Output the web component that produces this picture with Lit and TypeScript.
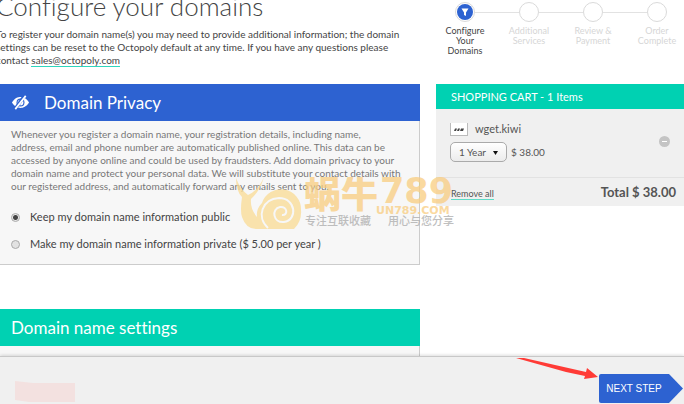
import { LitElement, html, css, svg } from "lit";
import { customElement, state } from "lit/decorators.js";

const STEPS = [
  ["Configure", "Your", "Domains"],
  ["Additional", "Services"],
  ["Review &", "Payment"],
  ["Order", "Complete"],
];

const hiddenEye = svg`
  <path d="M1 8.500C4 4 7 2.800 10 2.800S16 4 19 8.500C16 13 13 14.200 10 14.200S4 13 1 8.500Z" fill="#fff"/>
  <circle cx="10" cy="8.500" r="4.200" fill="#2d62d1"/>
  <circle cx="10" cy="8.500" r="3" fill="#fff"/>
  <path d="M4.500 15L14.500 1" stroke="#2d62d1" stroke-width="3.600"/>
  <path d="M4.500 15.500L15.500 1.500" stroke="#fff" stroke-width="1.800"/>`;

@customElement("checkout-steps")
export class CheckoutSteps extends LitElement {
  static styles = css`
    :host { display: block; }
    .steps {
      display: grid;
      grid-template-columns: repeat(4, 1fr);
      list-style: none;
      margin: 0 -5px 0 -3px;
      padding: 2px 0 0;
    }
    .step {
      display: flex;
      flex-direction: column;
      align-items: center;
      color: #d6d6d6;
      font-size: 9px;
      line-height: 10px;
      text-align: center;
    }
    .track { display: flex; align-items: center; align-self: stretch; margin-bottom: 4px; }
    .track::before, .track::after { content: ""; flex: 1; height: 1px; background: #e2e2e2; }
    .step:first-child .track::before, .step:last-child .track::after { background: none; }
    .dot {
      box-sizing: border-box;
      width: 20px;
      height: 20px;
      border: 1px solid #dadada;
      border-radius: 50%;
      padding: 1px;
    }
    .dot svg { display: block; width: 16px; height: 16px; }
    .current { color: #444; }
    .line { display: block; }
  `;
  render() {
    return html`<ol class="steps">
      ${STEPS.map(
        (lines, i) => html`<li class="step ${i === 0 ? "current" : ""}">
          <span class="track"><span class="dot">${
            i === 0
              ? html`<svg viewBox="0 0 16 16" aria-hidden="true">
                  <circle cx="8" cy="8" r="8" fill="#2d62d1" />
                  <path d="M4.500 4.500h7L9 8.500V12L7 11V8.500Z" fill="#fff" />
                </svg>`
              : ""
          }</span></span>
          ${lines.map((l) => html`<span class="line">${l}</span>`)}
        </li>`
      )}
    </ol>`;
  }
}

@customElement("shopping-cart")
export class ShoppingCart extends LitElement {
  static styles = css`
    :host { display: block; color: #555; }
    .cart { background: #f0f0f0; }
    h2 {
      margin: 0;
      padding: 0 15px;
      background: #00d1b2;
      color: #fff;
      font-size: 11px;
      font-weight: 400;
      line-height: 25px;
    }
    .item { display: flex; align-items: center; padding: 12px 14px 15px; border-bottom: 1px solid #e2e2e2; }
    .info { flex: 1; }
    .name { display: flex; align-items: center; gap: 7px; font-size: 11px; line-height: 16px; }
    .thumb { width: 18px; height: 13px; }
    .term { display: flex; align-items: center; gap: 4px; padding-top: 5px; font-size: 10px; }
    .picker { position: relative; display: flex; }
    select {
      appearance: none;
      width: 57px;
      height: 20px;
      padding: 0 8px;
      border: 1px solid #aaa;
      border-radius: 5px;
      background: linear-gradient(#fff, #ececec);
      color: #555;
      font: 10px Lato, sans-serif;
    }
    .caret { position: absolute; right: 9px; top: 9px; width: 5px; height: 4px; pointer-events: none; }
    .remove { width: 11px; height: 11px; padding: 0; border: 0; background: none; }
    .remove svg { display: block; }
    .sum { display: flex; justify-content: space-between; align-items: center; padding: 4px 8px 4px 15px; }
    a { margin-top: 4px; border-bottom: 1px solid #5fdcc8; color: #555; font-size: 9px; line-height: 11px; text-decoration: none; }
    .total { font-size: 13px; font-weight: 700; line-height: 20px; }
  `;
  render() {
    return html`<section class="cart">
      <h2>SHOPPING CART - 1 Items</h2>
      <div class="item">
        <div class="info">
          <div class="name">
            <svg class="thumb" viewBox="0 0 18 13" aria-hidden="true">
              <path d="M0 0h18v13H0Z" fill="#bbb" />
              <path d="M1 0h16v12H1Z" fill="#fff" />
              <path d="M4 8l1-2.500h2l-1 2.500M7 8l1-2.500h2l-1 2.500M10 8l1-2.500h3l-1 2.500" fill="#444" />
            </svg>
            <span>wget.kiwi</span>
          </div>
          <div class="term">
            <span class="picker">
              <select aria-label="Registration term"><option>1 Year</option></select>
              <svg class="caret" viewBox="0 0 5 4" aria-hidden="true"><path d="M0 0h5L2.500 4Z" fill="#111" /></svg>
            </span>
            <span>$ 38.00</span>
          </div>
        </div>
        <button class="remove" aria-label="Remove wget.kiwi">
          <svg width="11" height="11" viewBox="0 0 11 11" aria-hidden="true">
            <circle cx="5.500" cy="5.500" r="5.500" fill="#c4c4c4" />
            <path d="M3 5h5v1H3Z" fill="#fff" />
          </svg>
        </button>
      </div>
      <div class="sum">
        <a href="#remove">Remove all</a>
        <span class="total">Total $ 38.00</span>
      </div>
    </section>`;
  }
}

@customElement("app-root")
export class AppRoot extends LitElement {
  static styles = css`
    :host {
      display: flex;
      flex-direction: column;
      position: relative;
      height: 100vh;
      overflow: hidden;
      background: #fff;
      color: #444;
      font: 10px/13px Lato, "Noto Sans CJK SC", sans-serif;
      font-variant-ligatures: none;
    }
    .page {
      flex: 1;
      min-height: 0;
      overflow: hidden;
      display: grid;
      grid-template-columns: minmax(0, 420fr) minmax(0, 248fr);
      grid-template-rows: 84px auto;
      column-gap: 16px;
    }
    .intro { margin-left: -4px; white-space: nowrap; }
    h1 { margin: -9px 0 7px; font-size: 26px; font-weight: 300; line-height: 30px; }
    p { margin: 0; white-space: nowrap; }
    .line { display: block; }
    .intro a { border-bottom: 1px solid #2fd6bd; color: inherit; text-decoration: none; }
    .card { position: relative; margin-bottom: 44px; border: solid #ccc; border-width: 0 1px 1px 0; background: #f7f7f7; }
    .card h2 {
      display: flex;
      align-items: center;
      gap: 14px;
      height: 37px;
      margin: 0 -1px 0 0;
      padding: 0 11px;
      background: #2d62d1;
      color: #fff;
      font-size: 17px;
      font-weight: 400;
    }
    .card .green { background: #00d1b2; }
    .eye { width: 19px; height: 17px; }
    .body { padding: 7px 11px 11px; }
    .body p { color: #777; }
    .settings { padding-top: 8px; }
    .options { display: grid; gap: 9px; margin-top: 15px; }
    .option { display: flex; align-items: center; gap: 10px; font-size: 11px; line-height: 18px; }
    .option input {
      appearance: none;
      width: 9px;
      height: 9px;
      margin: 0;
      border: 1px solid #aaa;
      border-radius: 50%;
      background: #e2e2e2;
      box-sizing: border-box;
    }
    .option input:checked { background: radial-gradient(circle, #444 0 2px, #e8e8e8 3px); }
    .mark { position: absolute; left: 234px; top: 93px; width: 222px; height: 54px; z-index: 1; opacity: 0.75; pointer-events: none; }
    .bar {
      position: relative;
      display: flex;
      justify-content: space-between;
      align-items: flex-end;
      box-sizing: border-box;
      height: 48px;
      padding: 0 1px 1px 15px;
      border-top: 1px solid #c8c8c8;
      background: #f0f0f0;
      box-shadow: 0 -1px 3px #0002;
    }
    .smudge { width: 60px; height: 22px; }
    .next {
      width: 84px;
      height: 29px;
      padding: 0 14px 0 0;
      border: 0;
      border-radius: 2px;
      background: #2d62d1;
      clip-path: polygon(0 0, 70px 0, 100% 50%, 70px 100%, 0 100%);
      color: #fff;
      font: 10px "Liberation Sans", sans-serif;
    }
    .arrow { position: absolute; right: 86px; top: 0; width: 82px; height: 23px; }
  `;

  @state() private masked = false;

  render() {
    return html`
      <main class="page">
        <header class="intro">
          <h1>Configure your domains</h1>
          <p>
            <span class="line">To register your domain name(s) you may need to provide additional information; the domain</span>
            <span class="line">settings can be reset to the Octopoly default at any time. If you have any questions please</span>
            <span class="line">contact <a href="mailto:sales@octopoly.com">sales@octopoly.com</a></span>
          </p>
        </header>
        <checkout-steps></checkout-steps>
        <div>
          <section class="card">
            <h2><svg class="eye" viewBox="0 0 20 17" aria-hidden="true">${hiddenEye}</svg>Domain Privacy</h2>
            <div class="body">
              <p>
                <span class="line">Whenever you register a domain name, your registration details, including name,</span>
                <span class="line">address, email and phone number are automatically published online. This data can be</span>
                <span class="line">accessed by anyone online and could be used by fraudsters. Add domain privacy to your</span>
                <span class="line">domain name and protect your personal data. We will substitute your contact details with</span>
                <span class="line">our registered address, and automatically forward any emails sent to you.</span>
              </p>
              <div class="options">
                <label class="option"><input type="radio" name="privacy" .checked=${!this.masked} @change=${() => (this.masked = false)} />Keep my domain name information public</label>
                <label class="option"><input type="radio" name="privacy" .checked=${this.masked} @change=${() => (this.masked = true)} />Make my domain name information private ($ 5.00 per year )</label>
              </div>
            </div>
            <svg class="mark" viewBox="0 0 222 54" aria-hidden="true">
              <path d="M2 1Q2 14 8 20Q6 34 8 40Q12 52 22 52H60Q68 44 67 33A20 20 0 0 0 28 26Q22 32 23 40Q16 32 17 22Q26 14 30 0Q24 14 14 18Q6 12 2 1Z" fill="#fadb94" />
              <path d="M34 51C22 40 28 22 45 21C62 21 64 43 50 45C39 46 37 32 46 30C54 29 54 39 48 38" fill="none" stroke="#f7f7f7" stroke-width="2" />
              <g fill="#f9cd80" font-weight="900">
                <text x="70" y="31" font-size="37" font-family="Noto Sans CJK SC, sans-serif">蜗牛</text>
                <text x="146" y="26" font-size="35" font-family="DejaVu Sans, sans-serif">789</text>
                <text x="142" y="37" font-size="11" font-family="DejaVu Sans, sans-serif">UN789.COM</text>
              </g>
              <g fill="#aaa" font-family="Noto Sans CJK SC, sans-serif" font-size="11" font-weight="500">
                <text x="71" y="48">专注互联收藏</text>
                <text x="154" y="48">用心与您分享</text>
              </g>
            </svg>
          </section>
          <section class="card">
            <h2 class="green">Domain name settings</h2>
            <div class="body settings"><p>Once you have registered your domain name(s), change the settings here.</p></div>
          </section>
        </div>
        <shopping-cart></shopping-cart>
      </main>
      <footer class="bar">
        <svg class="smudge" viewBox="0 0 60 22" aria-hidden="true"><path d="M0 0L18 2H60V21H14L0 19Z" fill="#f3e1e0" /></svg>
        <svg class="arrow" viewBox="0 0 82 23" aria-hidden="true"><path d="M0 1L8 1L70 15L71 11L82 20L68 22L69 19L50 15Z" fill="#ff3b36" /></svg>
        <button class="next">NEXT STEP</button>
      </footer>
    `;
  }
}
